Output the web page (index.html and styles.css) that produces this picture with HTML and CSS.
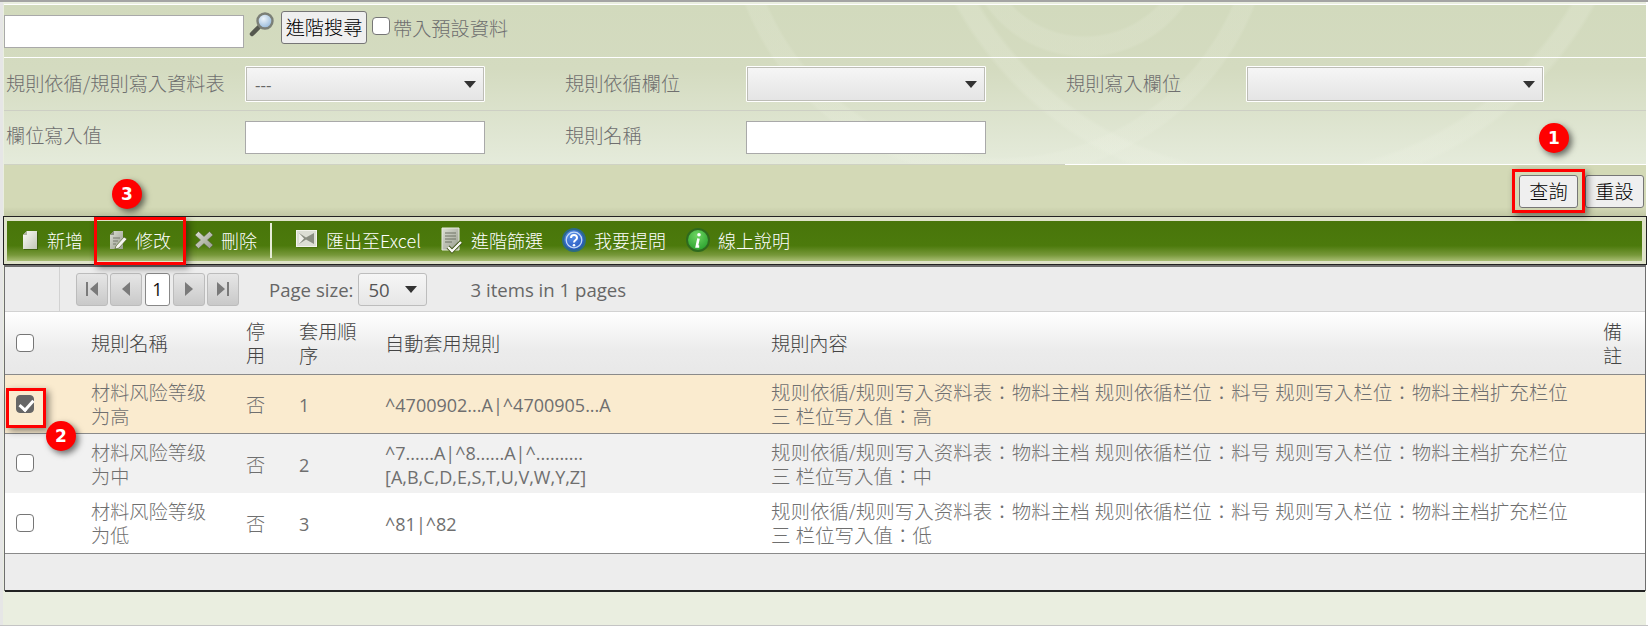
FILE: index.html
```html
<!DOCTYPE html>
<html lang="zh-Hant">
<head>
  <meta charset="UTF-8">
  <title>規則維護</title>
  <link rel="stylesheet" href="styles.css">
</head>
<body>
<div class="page">

  <!-- search panel -->
  <div class="panel">
    <div class="quick">
      <input class="field quick-field" type="text">
      <svg class="lens" width="27" height="25" viewBox="0 0 27 25">
        <defs>
          <radialGradient id="glass" cx="0.4" cy="0.35" r="0.7">
            <stop offset="0" stop-color="#eef5fb"/><stop offset="1" stop-color="#8fb4d8"/>
          </radialGradient>
        </defs>
        <path d="M10 15 L3 22" stroke="#55584f" stroke-width="4.5" stroke-linecap="round"/>
        <circle cx="16" cy="9" r="7.5" fill="url(#glass)" stroke="#7b7f77" stroke-width="2.4"/>
      </svg>
      <button class="btn adv-btn" type="button">進階搜尋</button>
      <input class="chk preset" type="checkbox">
      <span class="lbl">帶入預設資料</span>
    </div>
    <div class="rule rule-white"></div>
    <div class="row">
      <span class="lbl">規則依循/規則寫入資料表</span>
      <div class="combo"><span>---</span><i class="caret"></i></div>
      <span class="lbl">規則依循欄位</span>
      <div class="combo"><span></span><i class="caret"></i></div>
      <span class="lbl">規則寫入欄位</span>
      <div class="combo"><span></span><i class="caret"></i></div>
    </div>
    <div class="rule rule-grey"></div>
    <div class="row row-tall">
      <span class="lbl">欄位寫入值</span>
      <input class="field" type="text">
      <span class="lbl">規則名稱</span>
      <input class="field" type="text">
    </div>
    <div class="rule rule-split"></div>
  </div>

  <div class="actions">
    <button class="btn act-btn" type="button">查詢</button>
    <button class="btn act-btn" type="button">重設</button>
  </div>

  <!-- toolbar -->
  <div class="toolbar">
    <svg class="defs" width="0" height="0">
      <defs>
        <linearGradient id="paper" x1="0" y1="0" x2="1" y2="1">
          <stop offset="0" stop-color="#fbfbf6"/><stop offset="1" stop-color="#c3c7b6"/>
        </linearGradient>
        <linearGradient id="steel" x1="0" y1="0" x2="1" y2="1">
          <stop offset="0" stop-color="#dcdfd4"/><stop offset="1" stop-color="#989c8e"/>
        </linearGradient>
        <radialGradient id="blue" cx="0.4" cy="0.3" r="0.8">
          <stop offset="0" stop-color="#5b93ea"/><stop offset="1" stop-color="#1a49b4"/>
        </radialGradient>
        <radialGradient id="lime" cx="0.45" cy="0.3" r="0.8">
          <stop offset="0" stop-color="#6fd562"/><stop offset="1" stop-color="#1f9a26"/>
        </radialGradient>
      </defs>
    </svg>
    <div class="bar">
      <a class="tool">
        <svg width="18" height="24" viewBox="0 0 18 24"><path d="M7 4 H17 V22 H3 V8 Z" fill="#2c4806" opacity=".6"/><path d="M6 3 H16 V21 H2 V7 Z" fill="url(#paper)"/><path d="M2 7 H6 V3 Z" fill="#aeb2a0"/></svg>
        <span>新增</span>
      </a>
      <a class="tool tool-edit">
        <svg width="18" height="24" viewBox="0 0 18 24"><path d="M5 3 H14 V21 H1 V7 Z" fill="url(#steel)"/><path d="M1 7 H5 V3 Z" fill="#8a8e7e"/><path d="M4 10 H11 M4 13 H9 M4 16 H7" stroke="#74796a" stroke-width="1"/><path d="M7 18 L15 9 L18 11 L10 20 L6 21 Z" fill="#f6f6f0" stroke="#3c5410" stroke-width="0.6"/></svg>
        <span>修改</span>
      </a>
      <a class="tool">
        <svg width="18" height="24" viewBox="0 0 18 24"><path d="M3.5 3.5 L9 8.5 L14.5 3.5 L18 7 L12.5 12 L18 17 L14.5 20.5 L9 15.5 L3.5 20.5 L0 17 L5.5 12 L0 7 Z" fill="url(#steel)" stroke="#4f5c3a" stroke-width="0.5"/></svg>
        <span>刪除</span>
      </a>
      <i class="tool-sep"></i>
      <a class="tool tool-excel">
        <svg width="22" height="22" viewBox="0 0 22 22"><rect x="1.5" y="2.5" width="20" height="16" fill="#2c4806" opacity=".5"/><rect x="0.5" y="1.5" width="20" height="16" fill="#dcded4" stroke="#f3f3ec"/><path d="M3 4 L10 8.5 L18 4 V15 L10 10.5 L3 15 Z" fill="#8a8e82"/><path d="M3 4 L8 9.5 L3 15 Z" fill="#f0f0ea"/></svg>
        <span>匯出至Excel</span>
      </a>
      <a class="tool tool-filter">
        <svg width="22" height="27" viewBox="0 0 22 27"><path d="M1 1 H18 V23 H1 Z" fill="url(#steel)" stroke="#e8eadf"/><path d="M4 6 H15 M4 9 H15 M4 12 H15 M4 15 H11" stroke="#6f7364"/><path d="M7 20 L11 24 L20 15" fill="none" stroke="#3a4f12" stroke-width="4"/><path d="M7 20 L11 24 L20 15" fill="none" stroke="#fafaf6" stroke-width="2.4"/></svg>
        <span>進階篩選</span>
      </a>
      <a class="tool tool-help">
        <svg width="24" height="24" viewBox="0 0 24 24"><circle cx="12" cy="12" r="11" fill="url(#blue)" stroke="#2c6a86" stroke-width="2"/><circle cx="12" cy="12" r="7.8" fill="none" stroke="#c2dbf5" stroke-width="1.3"/><path d="M9 10 C9 6 15 6 15 10 C15 12 12 12 12 14.5" fill="none" stroke="#fff" stroke-width="2"/><circle cx="12" cy="17.2" r="1.3" fill="#fff"/></svg>
        <span>我要提問</span>
      </a>
      <a class="tool">
        <svg width="24" height="24" viewBox="0 0 24 24"><circle cx="12" cy="12" r="11" fill="url(#lime)" stroke="#2f6a1e" stroke-width="2"/><circle cx="13" cy="6.8" r="1.8" fill="#fff"/><path d="M12.5 10.5 L10.8 18.5 H13.2" fill="none" stroke="#fff" stroke-width="2.6"/></svg>
        <span>線上說明</span>
      </a>
    </div>
  </div>

  <!-- grid -->
  <div class="grid">
    <div class="pager">
      <div class="pager-side"></div>
      <div class="pager-nav">
        <a class="pg"><svg width="14" height="16" viewBox="0 0 14 16"><path d="M1 1 H3 V15 H1 Z M13 1 V15 L5 8 Z" fill="#7a7a7a"/></svg></a>
        <a class="pg"><svg width="10" height="16" viewBox="0 0 10 16"><path d="M9 1 V15 L1 8 Z" fill="#7a7a7a"/></svg></a>
        <a class="pg pg-on">1</a>
        <a class="pg"><svg width="10" height="16" viewBox="0 0 10 16"><path d="M1 1 V15 L9 8 Z" fill="#7a7a7a"/></svg></a>
        <a class="pg"><svg width="14" height="16" viewBox="0 0 14 16"><path d="M1 1 V15 L9 8 Z M11 1 H13 V15 H11 Z" fill="#7a7a7a"/></svg></a>
      </div>
      <span class="pg-label">Page size:</span>
      <div class="pg-size"><span>50</span><i class="caret"></i></div>
      <span class="pg-info">3 items in 1 pages</span>
    </div>

    <table class="rules">
      <colgroup>
        <col class="c-chk"><col class="c-name"><col class="c-off"><col class="c-seq"><col class="c-auto"><col class="c-body"><col class="c-note">
      </colgroup>
      <thead>
        <tr>
          <th class="cell-chk"><input class="chk" type="checkbox"></th>
          <th>規則名稱</th>
          <th>停用</th>
          <th>套用順序</th>
          <th>自動套用規則</th>
          <th>規則內容</th>
          <th>備註</th>
        </tr>
      </thead>
      <tbody>
        <tr class="row-on">
          <td class="cell-chk"><input class="chk" type="checkbox" checked></td>
          <td class="cell-name">材料风险等级为高</td>
          <td>否</td>
          <td class="cell-num">1</td>
          <td class="cell-num">^4700902...A|^4700905...A</td>
          <td class="cell-body">规则依循/规则写入资料表：物料主档 规则依循栏位：料号 规则写入栏位：物料主档扩充栏位三 栏位写入值：高</td>
          <td></td>
        </tr>
        <tr class="row-alt">
          <td class="cell-chk"><input class="chk" type="checkbox"></td>
          <td class="cell-name">材料风险等级为中</td>
          <td>否</td>
          <td class="cell-num">2</td>
          <td class="cell-num">^7......A|^8......A|^.......... [A,B,C,D,E,S,T,U,V,W,Y,Z]</td>
          <td class="cell-body">规则依循/规则写入资料表：物料主档 规则依循栏位：料号 规则写入栏位：物料主档扩充栏位三 栏位写入值：中</td>
          <td></td>
        </tr>
        <tr class="row-last">
          <td class="cell-chk"><input class="chk" type="checkbox"></td>
          <td class="cell-name">材料风险等级为低</td>
          <td>否</td>
          <td class="cell-num">3</td>
          <td class="cell-num">^81|^82</td>
          <td class="cell-body">规则依循/规则写入资料表：物料主档 规则依循栏位：料号 规则写入栏位：物料主档扩充栏位三 栏位写入值：低</td>
          <td></td>
        </tr>
      </tbody>
    </table>
    <div class="grid-foot"></div>
  </div>

  <!-- annotations -->
  <div class="mark mark-query"></div>
  <div class="mark mark-edit"></div>
  <div class="mark mark-check"></div>
  <div class="badge badge-1">1</div>
  <div class="badge badge-2">2</div>
  <div class="badge badge-3">3</div>
</div>
</body>
</html>
```

FILE: styles.css
```css
* {
  box-sizing: border-box;
}

html, body {
  margin: 0;
  height: 626px;
  overflow: hidden;
}

body {
  background: #fff;
  font-family: "Open Sans", "Noto Sans CJK TC", sans-serif;
  font-size: 18px;
  color: #777;
}

.page {
  position: relative;
  width: 1648px;
  height: 626px;
  padding: 3px 2px 1px 4px;
  border-top: 2px solid #a4a4a4;
  border-bottom: 1px solid #c4c4c4;
  background: linear-gradient(to right, #e6e6e6 3px, #eaeee0 3px, #eaeee0 1646px, #fff 1646px);
}

/* search panel */
.panel {
  height: 161px;
  margin-top: -1px;
  border-top: 1px solid #fff;
  background:
    radial-gradient(circle at 1081px -70px, transparent 100px, rgba(240,244,230,.16) 103px, rgba(240,244,230,.16) 120px, transparent 123px),
    radial-gradient(circle at 1271px -175px, transparent 342px, rgba(240,244,230,.2) 346px, rgba(240,244,230,.2) 362px, transparent 366px),
    radial-gradient(circle at 996px -100px, transparent 252px, rgba(240,244,230,.16) 255px, rgba(240,244,230,.16) 272px, transparent 275px),
    linear-gradient(#d2dabd 0, #d4dbc0 40%, #e5ebdb 100%);
}

.quick {
  display: flex;
  align-items: flex-start;
  height: 52px;
}

.quick-field {
  width: 240px;
  margin-top: 10px;
}

.lens {
  margin: 7px 0 0 5px;
}

.adv-btn {
  width: 86px;
  height: 33px;
  margin: 6px 0 0 5px;
}

.quick .preset {
  margin: 12px 3px 0 5px;
}

.quick .lbl {
  margin-top: 10px;
}

.rule {
  height: 1px;
}
.rule-white {
  background: #fff;
}
.rule-grey {
  background: #cdcfc4;
}
.rule-split {
  background: linear-gradient(to right, #cfd2c4 1061px, #fff 1061px);
}

.row {
  display: grid;
  grid-template-columns: 239px 320px 181px 320px 180px 298px;
  align-items: center;
  height: 52px;
  padding-left: 2px;
}
.row-tall {
  height: 53px;
}

.lbl {
  font-family: "Noto Sans CJK TC", sans-serif;
  font-size: 19.2px;
  font-weight: 300;
  line-height: 26px;
  color: #6f6f6f;
  white-space: nowrap;
}
.row .lbl {
  margin-top: -2px;
}
.row-tall .lbl {
  margin-top: -5px;
}

.field {
  height: 33px;
  width: 240px;
  border: 1px solid #a9a9a9;
  background: #fff;
  padding: 0 4px;
}

.combo {
  display: flex;
  align-items: center;
  justify-content: space-between;
  height: 36px;
  width: 240px;
  padding: 0 8px 0 9px;
  border: 1px solid #fff;
  border-radius: 1px;
  box-shadow: inset 0 0 0 1px #bdbdb6;
  background: linear-gradient(#f6f6f6, #e4e4e4);
  color: #666;
  font-size: 17px;
}
.row .combo:last-child {
  width: 298px;
}

.caret {
  width: 0;
  height: 0;
  border: 6px solid transparent;
  border-top: 7px solid #333;
  border-bottom: 0;
}

.btn {
  padding: 0;
  border: 1px solid #767676;
  border-radius: 3px;
  background: #efefef;
  color: #000;
  font-family: "Noto Sans CJK TC", sans-serif;
  font-size: 19.2px;
  font-weight: 300;
  line-height: 1;
}

.chk {
  appearance: none;
  position: relative;
  flex: none;
  width: 18px;
  height: 18px;
  margin: 0;
  border: 1px solid #767676;
  border-radius: 4px;
  background: #fff;
}
.chk:checked {
  border-color: #666;
  background: #666;
}
.chk:checked::after {
  content: "";
  position: absolute;
  left: 5px;
  top: 1px;
  width: 6px;
  height: 11px;
  border: solid #fff;
  border-width: 0 3px 3px 0;
  transform: rotate(42deg);
}

/* query / reset strip */
.actions {
  display: flex;
  justify-content: flex-end;
  gap: 7px;
  height: 51px;
  padding: 10px 2px 0 0;
  background: linear-gradient(#d3d9b6 0, #d3d9b6 82%, #c2c8a4 100%);
}

.act-btn {
  width: 59px;
  height: 33px;
}

/* green toolbar */
.toolbar {
  height: 49px;
  margin: 0 0 0 -1px;
  width: 1644px;
  padding: 4px 4px 3px 3px;
  border: 1px solid #222;
  background: #dfe3c9;
}

.defs {
  position: absolute;
}

.bar {
  display: flex;
  align-items: center;
  height: 40px;
  padding: 0 0 2px 14px;
  background: linear-gradient(#48750a 0, #4c7a0c 62%, #77983a 85%, #a9bf74 100%);
  color: #fff;
  font-family: "Noto Sans CJK TC", sans-serif;
  font-size: 18px;
  font-weight: 300;
}

.tool {
  display: flex;
  align-items: center;
  gap: 8px;
  margin-right: 26px;
  white-space: nowrap;
}
.tool-edit {
  margin-right: 24px;
}
.tool-excel {
  margin-right: 20px;
}
.tool-filter {
  margin-right: 19px;
}
.tool-help {
  margin-right: 20px;
}

.tool-sep {
  width: 2px;
  height: 35px;
  margin: 0 24px 0 -13px;
  background: #e6ecd6;
}

/* grid */
.grid {
  height: 326px;
  border: solid #6e6e6e;
  border-width: 2px 1px 0 1px;
  background: #ececec;
}

.pager {
  display: flex;
  align-items: center;
  height: 45px;
  border-bottom: 1px solid #d2d2d2;
}

.pager-side {
  width: 55px;
  height: 100%;
  border-right: 1px solid #d2d2d2;
}

.pager-nav {
  display: flex;
  gap: 2px;
  margin-left: 16px;
}

.pg {
  display: flex;
  align-items: center;
  justify-content: center;
  width: 32px;
  height: 33px;
  border: 1px solid #bcbcbc;
  border-radius: 3px;
  background: linear-gradient(#e6e6e6, #c9c9c9);
  color: #111;
  font-size: 18px;
}
.pg-on {
  width: 25px;
  margin: 0 1px;
  border-color: #888;
  background: #fff;
}

.pg-label {
  margin-left: 30px;
  font-size: 18.6px;
  color: #666;
}

.pg-size {
  display: flex;
  align-items: center;
  justify-content: space-between;
  width: 69px;
  height: 33px;
  margin-left: 5px;
  padding: 0 9px;
  border: 1px solid #bdbdbd;
  border-radius: 3px;
  background: linear-gradient(#f6f6f6, #e6e6e6);
  color: #555;
  font-size: 18.6px;
}

.pg-info {
  margin-left: 43px;
  font-size: 18.6px;
  color: #666;
}

.rules {
  width: 1640px;
  table-layout: fixed;
  border-collapse: collapse;
  font-family: "Open Sans", "Noto Sans CJK TC", sans-serif;
  font-size: 19.2px;
  font-weight: 300;
  line-height: 24px;
}

.c-chk { width: 75px; }
.c-name { width: 155px; }
.c-off { width: 53px; }
.c-seq { width: 86px; }
.c-auto { width: 386px; }
.c-body { width: 832px; }
.c-note { width: 53px; }

.rules th, .rules td {
  padding: 3px 10px 0 11px;
  vertical-align: middle;
  text-align: left;
  font-weight: 300;
}

.rules th {
  height: 62px;
  border-bottom: 1px solid #8a8a8a;
  background: linear-gradient(#fff 0, #ececec 60%, #e8e8e8 100%);
  color: #444;
}

.rules td {
  color: #6f6f6f;
}

.rules .cell-chk {
  padding: 4px 0 0 11px;
}

.rules td.cell-name {
  padding-right: 27px;
}

.rules td.cell-num {
  font-size: 18px;
  font-weight: 400;
}

.rules td.cell-body {
  padding-right: 22px;
  font-size: 19.5px;
}

.row-on td {
  height: 59px;
  border-bottom: 1px solid #8a8a8a;
  background: #faebcf;
}
.row-alt td {
  height: 60px;
  background: #f1f1f1;
}
.row-last td {
  height: 60px;
  border-bottom: 1px solid #8a8a8a;
  background: #fff;
}

.grid-foot {
  height: 38px;
  border-bottom: 2px solid #222;
  background: #ededed;
}

/* annotations drawn over the screen */
.mark {
  position: absolute;
  border: 3px solid #f00;
  box-shadow: 3px 3px 7px rgba(0,0,0,.45);
}
.mark-query { left: 1512px; top: 167px; width: 73px; height: 44px; }
.mark-edit { left: 94px; top: 215px; width: 92px; height: 48px; }
.mark-check { left: 6px; top: 386px; width: 40px; height: 40px; }

.badge {
  position: absolute;
  width: 30px;
  height: 30px;
  border-radius: 50%;
  background: #f00;
  box-shadow: 3px 3px 6px rgba(0,0,0,.55);
  color: #fff;
  font-family: "DejaVu Sans", sans-serif;
  font-size: 17px;
  font-weight: 700;
  line-height: 30px;
  text-align: center;
}
.badge-1 { left: 1539px; top: 121px; }
.badge-2 { left: 46px; top: 419px; }
.badge-3 { left: 112px; top: 177px; }
```
